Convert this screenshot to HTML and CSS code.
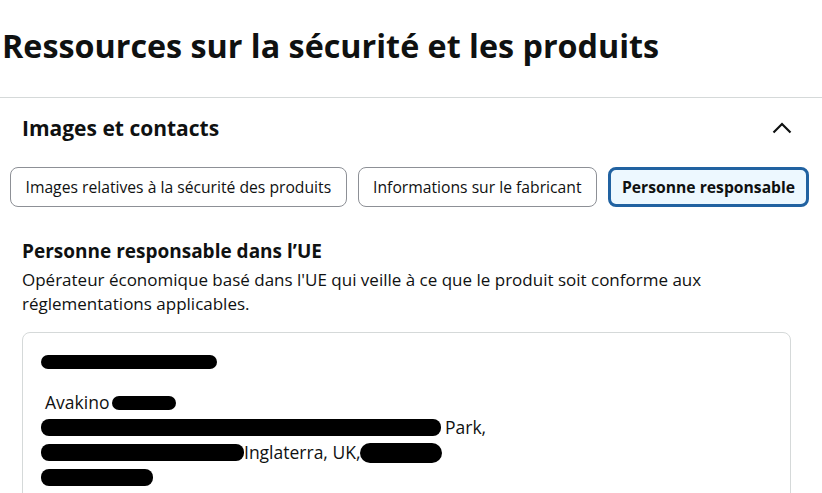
FILE: index.html
```html
<html>
<head>
    <title>Ressources sur la sécurité et les produits</title>
    <link rel="stylesheet" href="styles.css">
</head>
<body>
    <h1 class="page-title">Ressources sur la sécurité et les produits</h1>
    <div class="section">
        <div class="section-header">
            <h2>Images et contacts</h2>
            <svg class="chevron" width="20" height="12" viewBox="0 0 20 12">
                <path d="M1.5 10.5 L10 2 L18.5 10.5" fill="none" stroke="#0f1111" stroke-width="2.2"/>
            </svg>
        </div>
        <div class="tabs">
            <button class="tab">Images relatives à la sécurité des produits</button>
            <button class="tab">Informations sur le fabricant</button>
            <button class="tab active">Personne responsable</button>
        </div>
        <div class="panel">
            <h3>Personne responsable dans l’UE</h3>
            <p>Opérateur économique basé dans l'UE qui veille à ce que le produit soit conforme aux réglementations applicables.</p>
            <div class="card">
                <div class="line first"><span class="scribble lead" style="width: 176px"></span></div>
                <div class="line"><span>Avakino</span><span class="scribble small" style="width: 64px"></span></div>
                <div class="line"><span class="scribble lead thick" style="width: 400px"></span><span class="faded">Park,</span></div>
                <div class="line"><span class="scribble lead thick" style="width: 203px"></span><span>Inglaterra, UK,</span><span class="scribble tall" style="width: 82px"></span></div>
                <div class="line"><span class="scribble lead thick" style="width: 112px"></span></div>
            </div>
        </div>
    </div>
</body>
</html>
```

FILE: styles.css
```css
body {
    margin: 0;
    font-family: "Open Sans", "Liberation Sans", sans-serif;
    color: #0f1111;
    background: white;
    overflow: hidden;
}

.page-title {
    font-size: 32.3px;
    line-height: 40px;
    font-weight: bold;
    margin: 0;
    padding: 25px 0 0 2px;
    height: 98px;
    box-sizing: border-box;
    border-bottom: 1px solid #d5d9d9;
}

.section {
    padding: 0 12px 0 10px;
}

.section-header {
    display: flex;
    justify-content: space-between;
    align-items: center;
    padding: 15px 18px 0 12px;
    height: 30px;
}

.section-header h2 {
    font-size: 21px;
    line-height: 30px;
    font-weight: bold;
    margin: 0;
}

.tabs {
    display: flex;
    gap: 11px;
    margin-top: 24px;
}

.tab {
    flex-shrink: 0;
    white-space: nowrap;
    height: 40px;
    padding: 0 14.5px;
    border: 1px solid #8d9096;
    border-radius: 8px;
    background: white;
    font-family: inherit;
    font-size: 15.7px;
    color: #0f1111;
}

.tab.active {
    border: 3px solid #2162a1;
    background: #edf8ff;
    font-weight: bold;
    padding: 0 11px;
}

.panel {
    padding: 0 19px 0 12px;
}

.panel h3 {
    font-size: 19px;
    line-height: 24px;
    font-weight: bold;
    margin: 32px 0 5px;
}

.panel p {
    font-size: 17px;
    line-height: 24px;
    margin: 0 0 16px;
}

.card {
    border: 1px solid #d5d9d9;
    border-radius: 8px;
    padding: 16px 22px 20px;
    font-size: 17.5px;
    line-height: 25px;
}

.line {
    display: flex;
    align-items: center;
    height: 25px;
}

.line.first {
    margin-bottom: 16px;
}

.scribble {
    display: inline-block;
    height: 14px;
    background: black;
    border-radius: 8px;
}

.scribble.lead {
    margin-left: -4px;
}

.scribble.small {
    margin-left: 3px;
}

.scribble.thick {
    height: 17px;
}

.scribble.tall {
    height: 20px;
    border-radius: 10px;
}

.faded {
    margin-left: 4px;
}
```
